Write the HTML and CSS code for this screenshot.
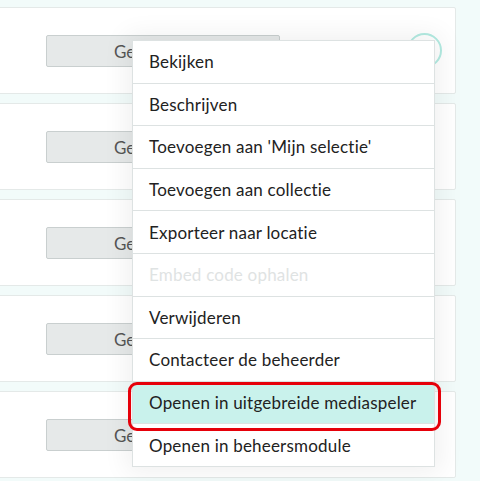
FILE: index.html
```html
<!DOCTYPE html>
<html lang="nl">
<head>
<meta charset="utf-8">
<link rel="stylesheet" href="styles.css">
</head>
<body>
<div class="list">
  <div class="card"><button class="btn">Geselecteerd</button><span class="ring"></span></div>
  <div class="card"><button class="btn">Geselecteerd</button></div>
  <div class="card"><button class="btn">Geselecteerd</button></div>
  <div class="card"><button class="btn">Geselecteerd</button></div>
  <div class="card"><button class="btn">Geselecteerd</button></div>
</div>
<ul class="menu">
  <li class="item">Bekijken</li>
  <li class="item">Beschrijven</li>
  <li class="item">Toevoegen aan 'Mijn selectie'</li>
  <li class="item">Toevoegen aan collectie</li>
  <li class="item">Exporteer naar locatie</li>
  <li class="item disabled">Embed code ophalen</li>
  <li class="item">Verwijderen</li>
  <li class="item">Contacteer de beheerder</li>
  <li class="item active">Openen in uitgebreide mediaspeler</li>
  <li class="item">Openen in beheersmodule</li>
</ul>
<div class="callout"></div>
</body>
</html>
```
FILE: styles.css
```css
html, body {
  margin: 0;
  padding: 0;
  background: #f2fbfa;
  font-family: Lato, "Noto Sans", sans-serif;
  width: 480px;
  height: 481px;
  overflow: hidden;
}
.list {
  display: flex;
  flex-direction: column;
  gap: 9px;
  padding-top: 7px;
  margin-left: -4px;
  width: 460px;
}
.card {
  position: relative;
  height: 87px;
  background: #fff;
  border: 1px solid #e4e9e8;
  border-radius: 2px;
  padding: 27px 0 0 49px;
  box-sizing: border-box;
}
.btn {
  width: 234px;
  height: 32px;
  background: #e6e9e9;
  border: 1px solid #c9cfcf;
  border-radius: 2px;
  color: #555;
  font-family: inherit;
  font-size: 17px;
  padding: 0;
}
.ring {
  position: absolute;
  left: 410px;
  top: 25px;
  width: 31px;
  height: 31px;
  border: 2px solid #b3ebe2;
  border-radius: 50%;
}
.menu {
  position: absolute;
  left: 132px;
  top: 40px;
  width: 301px;
  margin: 0;
  padding: 0;
  list-style: none;
  background: #fff;
  border: 1px solid #dde2e2;
  box-shadow: 0 0 24px 6px rgba(0, 0, 0, 0.06);
}
.item {
  height: 42.6px;
  box-sizing: border-box;
  display: flex;
  align-items: center;
  padding-left: 16px;
  font-size: 17px;
  letter-spacing: 0.2px;
  color: #222;
  border-top: 1px solid #dde2e2;
}
.item:first-child { border-top: none; height: 41.6px; }
.item.disabled { color: #dfe3e3; }
.item.active { background: #c9f2ec; }
.callout {
  position: absolute;
  left: 128px;
  top: 382px;
  width: 313px;
  height: 49px;
  box-sizing: border-box;
  border: 3px solid #e6000a;
  border-radius: 9px;
}
```
